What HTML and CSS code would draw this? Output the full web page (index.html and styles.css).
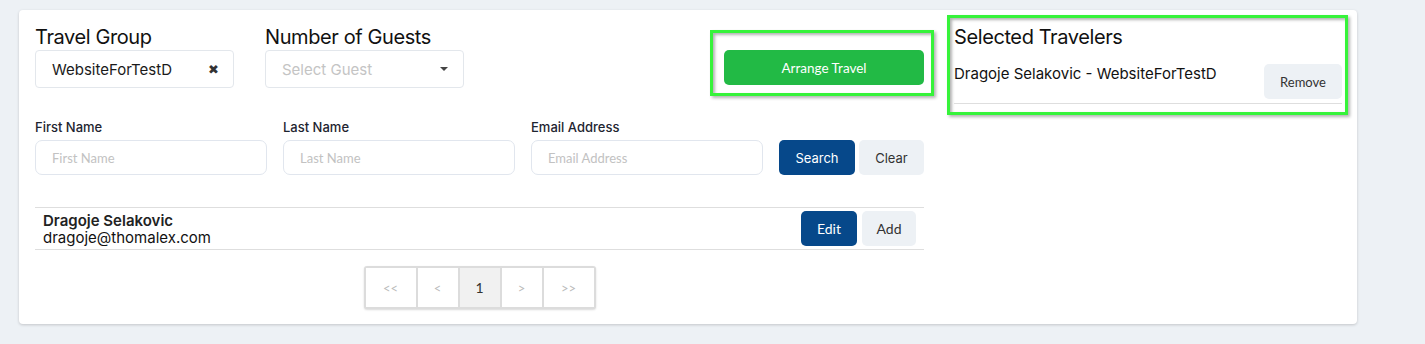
FILE: index.html
```html
<!DOCTYPE html>
<html lang="en">
<head>
    <meta charset="UTF-8">
    <meta name="viewport" content="width=device-width, initial-scale=1.0">
    <title>Arrange Travel</title>
    <link rel="stylesheet" href="styles.css">
</head>
<body>

<div class="card">
    <div class="main-col">
        <div class="top-row">
            <div class="top-group">
                <label class="big-label">Travel Group</label>
                <div class="select-box">
                    <span class="select-value">WebsiteForTestD</span>
                    <span class="clear-x">&#10006;</span>
                </div>
            </div>
            <div class="top-group">
                <label class="big-label">Number of Guests</label>
                <div class="select-box">
                    <span class="select-placeholder">Select Guest</span>
                    <span class="caret"></span>
                </div>
            </div>
            <div class="highlight arrange-wrap">
                <button class="btn-arrange">Arrange Travel</button>
            </div>
        </div>

        <div class="search-row">
            <div class="field">
                <label for="first">First Name</label>
                <input type="text" id="first" placeholder="First Name">
            </div>
            <div class="field">
                <label for="last">Last Name</label>
                <input type="text" id="last" placeholder="Last Name">
            </div>
            <div class="field">
                <label for="email">Email Address</label>
                <input type="text" id="email" placeholder="Email Address">
            </div>
            <div class="search-actions">
                <button class="btn btn-dark btn-search">Search</button>
                <button class="btn btn-light btn-clear">Clear</button>
            </div>
        </div>

        <div class="result-row">
            <div class="result-info">
                <div class="result-name">Dragoje Selakovic</div>
                <div class="result-email">dragoje@thomalex.com</div>
            </div>
            <div class="result-actions">
                <button class="btn btn-dark btn-edit">Edit</button>
                <button class="btn btn-light btn-add">Add</button>
            </div>
        </div>

        <div class="pager">
            <span class="page wide">&lt;&lt;</span>
            <span class="page">&lt;</span>
            <span class="page current">1</span>
            <span class="page">&gt;</span>
            <span class="page wide">&gt;&gt;</span>
        </div>
    </div>

    <div class="highlight selected-box">
        <h3 class="selected-title">Selected Travelers</h3>
        <div class="selected-row">
            <span class="selected-name">Dragoje Selakovic - WebsiteForTestD</span>
            <button class="btn btn-light btn-remove">Remove</button>
        </div>
    </div>
</div>

</body>
</html>
```

FILE: styles.css
```css
body {
    font-family: Inter, "Noto Sans", sans-serif;
    background-color: #edf1f5;
    margin: 0;
    padding: 10px 68px 20px 19px;
    color: #111;
}

.card {
    display: flex;
    align-items: flex-start;
    background: #fff;
    border-radius: 4px;
    box-shadow: 0 1px 3px rgba(0, 0, 0, 0.18);
    padding: 5px 9px 16px 16px;
    height: 293px;
}

.main-col {
    width: 889px;
    padding-top: 10px;
}

/* top row */
.top-row {
    display: flex;
    align-items: flex-start;
}

.top-group {
    width: 199px;
    margin-right: 31px;
}

.big-label {
    display: block;
    font-size: 20px;
    letter-spacing: -0.4px;
    line-height: 25px;
    color: #111;
}

.select-box {
    display: flex;
    align-items: center;
    justify-content: space-between;
    height: 36px;
    border: 1px solid #e3e7ec;
    border-radius: 4px;
    padding: 0 13px 0 16px;
}

.select-value {
    font-size: 15px;
    color: #1a1a1a;
}

.select-placeholder {
    font-size: 15px;
    color: #c4c4c4;
}

.clear-x {
    font-size: 13px;
    color: #333;
    margin-right: 1px;
}

.caret {
    width: 0;
    height: 0;
    border-left: 4px solid transparent;
    border-right: 4px solid transparent;
    border-top: 4px solid #444;
    margin-right: 2px;
}

.highlight {
    border: 3px solid #36f33a;
    box-shadow: 2px 2px 3px rgba(0, 0, 0, 0.3), inset 2px 2px 3px rgba(0, 0, 0, 0.3);
}

.arrange-wrap {
    margin-left: auto;
    margin-right: -10px;
    margin-top: 5px;
    padding: 17px 7px 8px 11px;
}

.btn-arrange {
    display: block;
    width: 200px;
    height: 35px;
    border: none;
    border-radius: 5px;
    background-color: #22ba45;
    color: #fff;
    font-family: Lato, sans-serif;
    font-size: 13.5px;
}

/* search row */
.search-row {
    display: flex;
    align-items: flex-end;
    margin-top: 23px;
}

.field {
    width: 232px;
    margin-right: 16px;
}

.field label {
    display: block;
    font-size: 13px;
    font-weight: 500;
    line-height: 17px;
    color: #1e2430;
    margin-bottom: 4px;
}

.field input {
    box-sizing: border-box;
    width: 100%;
    height: 35px;
    padding: 0 16px;
    border: 1px solid #e1e6ee;
    border-radius: 7px;
    font-family: Lato, sans-serif;
    font-size: 13px;
    outline: none;
}

.field input::placeholder {
    color: #c2c2c2;
}

.search-actions {
    display: flex;
    gap: 4px;
}

.btn {
    height: 35px;
    border: none;
    border-radius: 5px;
    font-family: Inter, sans-serif;
    font-size: 13px;
    padding: 0;
}

.btn-dark {
    background-color: #06488a;
    color: #fff;
}

.btn-light {
    background-color: #edf1f5;
    color: #333;
}

.btn-search { width: 76px; }
.btn-clear { width: 65px; }

/* result row */
.result-row {
    display: flex;
    align-items: center;
    justify-content: space-between;
    margin-top: 32px;
    padding: 3px 8px;
    border-top: 1px solid #dedede;
    border-bottom: 1px solid #dedede;
}

.result-info {
    font-size: 15px;
    line-height: 17px;
    color: #111;
}

.result-name {
    font-weight: 600;
    color: #222;
}

.result-actions {
    display: flex;
    gap: 5px;
}

.btn-edit { width: 56px; font-family: Lato, sans-serif; font-size: 14px; }
.btn-add { width: 54px; font-family: Lato, sans-serif; font-size: 14px; }

/* pagination */
.pager {
    display: flex;
    gap: 2px;
    width: max-content;
    margin: 16px auto 0;
    padding: 2px;
    background: #dcdcdc;
    border-radius: 3px;
    box-shadow: 0 1px 2px rgba(0, 0, 0, 0.15);
}

.page {
    display: flex;
    align-items: center;
    justify-content: center;
    width: 40px;
    height: 39px;
    background: #fff;
    color: #bbb;
    font-family: Lato, sans-serif;
    font-size: 13px;
}

.page.wide {
    width: 50px;
}

.page.current {
    background: #f1f1f1;
    color: #333;
    font-size: 14px;
}

/* selected travelers */
.selected-box {
    width: 395px;
    margin-left: 23px;
    padding: 7px 3px 8px 4px;
}

.selected-title {
    margin: 0;
    font-size: 20px;
    font-weight: 400;
    letter-spacing: -0.4px;
    line-height: 24px;
    color: #111;
}

.selected-row {
    display: flex;
    align-items: flex-start;
    justify-content: space-between;
    margin-top: 15px;
    padding-bottom: 4px;
    border-bottom: 1px solid #dedede;
}

.selected-name {
    font-size: 15px;
    line-height: 18px;
    margin-top: 1px;
    color: #111;
}

.btn-remove {
    width: 78px;
    font-family: Lato, sans-serif;
}
```
